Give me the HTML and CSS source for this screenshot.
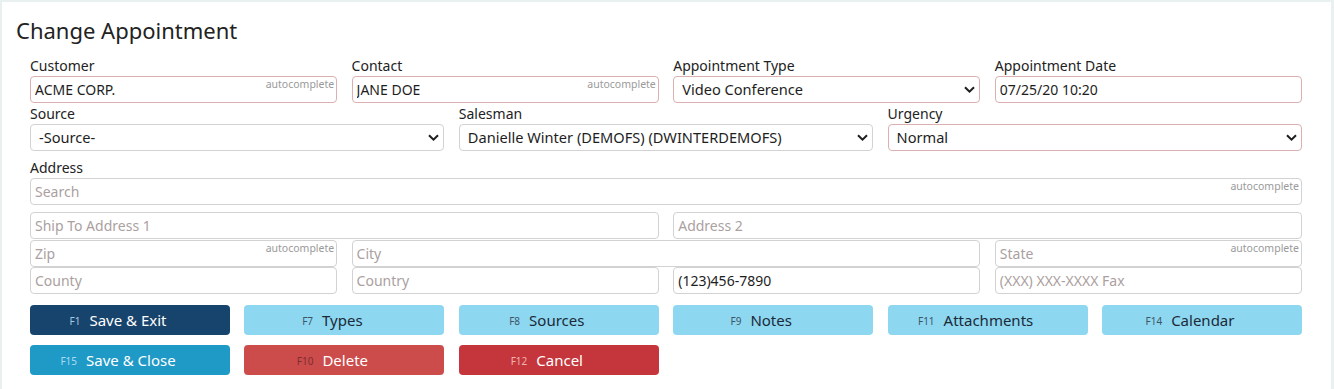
FILE: index.html
```html
<!DOCTYPE html>
<html lang="en">
  <head>
    <meta charset="UTF-8" />
    <meta name="viewport" content="width=device-width, initial-scale=1.0" />
    <link rel="stylesheet" href="styles.css">
    <title>Change Appointment</title>
  </head>

  <body>
    <main class="card">
      <h1 class="card__title">Change Appointment</h1>
      <form class="appt-form">
        <div class="row">
          <div class="field span-3">
            <label class="field__label">Customer</label>
            <div class="field__control">
              <input class="input input--req" value="ACME CORP." />
              <span class="hint">autocomplete</span>
            </div>
          </div>
          <div class="field span-3">
            <label class="field__label">Contact</label>
            <div class="field__control">
              <input class="input input--req" value="JANE DOE" />
              <span class="hint">autocomplete</span>
            </div>
          </div>
          <div class="field span-3">
            <label class="field__label">Appointment Type</label>
            <div class="field__control">
              <select class="input select input--req">
                <option>Video Conference</option>
              </select>
              <svg class="chevron" width="11" height="7" viewBox="0 0 11 7">
                <path d="M1 1.2 L5.5 5.6 L10 1.2" fill="none" stroke="#1d1d1d" stroke-width="2" />
              </svg>
            </div>
          </div>
          <div class="field span-3">
            <label class="field__label">Appointment Date</label>
            <div class="field__control">
              <input class="input input--req" value="07/25/20 10:20" />
            </div>
          </div>
        </div>

        <div class="row row--tight">
          <div class="field span-4">
            <label class="field__label">Source</label>
            <div class="field__control">
              <select class="input select">
                <option>-Source-</option>
              </select>
              <svg class="chevron" width="11" height="7" viewBox="0 0 11 7">
                <path d="M1 1.2 L5.5 5.6 L10 1.2" fill="none" stroke="#1d1d1d" stroke-width="2" />
              </svg>
            </div>
          </div>
          <div class="field span-4">
            <label class="field__label">Salesman</label>
            <div class="field__control">
              <select class="input select">
                <option>Danielle Winter (DEMOFS) (DWINTERDEMOFS)</option>
              </select>
              <svg class="chevron" width="11" height="7" viewBox="0 0 11 7">
                <path d="M1 1.2 L5.5 5.6 L10 1.2" fill="none" stroke="#1d1d1d" stroke-width="2" />
              </svg>
            </div>
          </div>
          <div class="field span-4">
            <label class="field__label">Urgency</label>
            <div class="field__control">
              <select class="input select input--req">
                <option>Normal</option>
              </select>
              <svg class="chevron" width="11" height="7" viewBox="0 0 11 7">
                <path d="M1 1.2 L5.5 5.6 L10 1.2" fill="none" stroke="#1d1d1d" stroke-width="2" />
              </svg>
            </div>
          </div>
        </div>

        <div class="address">
          <label class="field__label">Address</label>
          <div class="field__control">
            <input class="input" placeholder="Search" />
            <span class="hint">autocomplete</span>
          </div>

          <div class="row row--ship">
            <input class="input span-6" placeholder="Ship To Address 1" />
            <input class="input span-6" placeholder="Address 2" />
          </div>

          <div class="row row--zip">
            <div class="field__control span-3">
              <input class="input" placeholder="Zip" />
              <span class="hint">autocomplete</span>
            </div>
            <input class="input span-6" placeholder="City" />
            <div class="field__control span-3">
              <input class="input" placeholder="State" />
              <span class="hint">autocomplete</span>
            </div>
          </div>

          <div class="row">
            <input class="input span-3" placeholder="County" />
            <input class="input span-3" placeholder="Country" />
            <input class="input span-3" value="(123)456-7890" />
            <input class="input span-3" placeholder="(XXX) XXX-XXXX Fax" />
          </div>
        </div>

        <div class="row row--buttons">
          <button type="button" class="btn btn--navy span-2"><span class="btn__key">F1</span>Save &amp; Exit</button>
          <button type="button" class="btn btn--light span-2"><span class="btn__key">F7</span>Types</button>
          <button type="button" class="btn btn--light span-2"><span class="btn__key">F8</span>Sources</button>
          <button type="button" class="btn btn--light span-2"><span class="btn__key">F9</span>Notes</button>
          <button type="button" class="btn btn--light span-2"><span class="btn__key">F11</span>Attachments</button>
          <button type="button" class="btn btn--light span-2"><span class="btn__key">F14</span>Calendar</button>
        </div>
        <div class="row row--buttons2">
          <button type="button" class="btn btn--info span-2"><span class="btn__key">F15</span>Save &amp; Close</button>
          <button type="button" class="btn btn--delete span-2"><span class="btn__key">F10</span>Delete</button>
          <button type="button" class="btn btn--cancel span-2"><span class="btn__key">F12</span>Cancel</button>
        </div>
      </form>
    </main>
  </body>
</html>
```

FILE: styles.css
```css
* {
  box-sizing: border-box;
}

body {
  margin: 0;
  background-color: #e9f0f0;
  font-family: "Noto Sans", "DejaVu Sans", sans-serif;
  font-size: 14px;
  color: #222;
}

.card {
  margin: 2px 3px 0 2px;
  min-height: 387px;
  background-color: #fff;
  padding: 14px 29px 0 28px;
}

.card__title {
  margin: 0 0 0 -14px;
  font-size: 22px;
  font-weight: 400;
  line-height: 28px;
  color: #222;
}

.appt-form {
  margin-top: 13px;
}

.row {
  display: grid;
  grid-template-columns: repeat(12, 1fr);
  column-gap: 14.4px;
}
.row--tight {
  margin-top: 2px;
}
.row--ship {
  margin-top: 7px;
}
.row--zip {
  margin-top: 1px;
}
.row--buttons {
  margin-top: 11px;
}
.row--buttons2 {
  margin-top: 10px;
}

.span-2 {
  grid-column: span 2;
}
.span-3 {
  grid-column: span 3;
}
.span-4 {
  grid-column: span 4;
}
.span-6 {
  grid-column: span 6;
}

.field__label {
  display: block;
  line-height: 17px;
  height: 19px;
}

.field__control {
  position: relative;
}

.address {
  margin-top: 8px;
}

.input {
  display: block;
  width: 100%;
  height: 27px;
  margin: 0;
  padding: 0 4px;
  border: 1px solid #d2d2d2;
  border-radius: 4px;
  background-color: #fff;
  font-family: inherit;
  font-size: 14px;
  color: #1e1e1e;
  outline: none;
}
.input::placeholder {
  color: #ab9f9f;
}
.input--req {
  border-color: #dcb0b0;
}

.select {
  appearance: none;
  -webkit-appearance: none;
  padding: 0 24px 2px 8px;
  font-size: 14.6px;
}

.chevron {
  position: absolute;
  right: 5px;
  top: 10px;
  pointer-events: none;
}

.hint {
  position: absolute;
  top: 2px;
  right: 3px;
  font-size: 10.5px;
  line-height: 13px;
  color: #9a9a9a;
  pointer-events: none;
}

.btn {
  height: 30px;
  padding: 0 24px 1px 0;
  border: none;
  border-radius: 4px;
  font-family: inherit;
  font-size: 15px;
  display: flex;
  align-items: center;
  justify-content: center;
  cursor: pointer;
}
.btn__key {
  font-size: 10px;
  margin-right: 9px;
  padding-top: 2px;
}
.btn--navy {
  background-color: #17446c;
  color: #fff;
}
.btn--navy .btn__key {
  color: #a9c7e2;
}
.btn--light {
  background-color: #8dd7f0;
  color: #1c2a38;
}
.btn--light .btn__key {
  color: #3e5566;
}
.btn--info {
  background-color: #1f99c6;
  color: #fff;
}
.btn--info .btn__key {
  color: #a9dcf1;
}
.btn--delete {
  background-color: #cc4b4b;
  color: #fff;
}
.btn--delete .btn__key {
  color: #7d2f2f;
}
.btn--cancel {
  background-color: #c4363b;
  color: #fff;
}
.btn--cancel .btn__key {
  color: #eeb4b4;
}
```
